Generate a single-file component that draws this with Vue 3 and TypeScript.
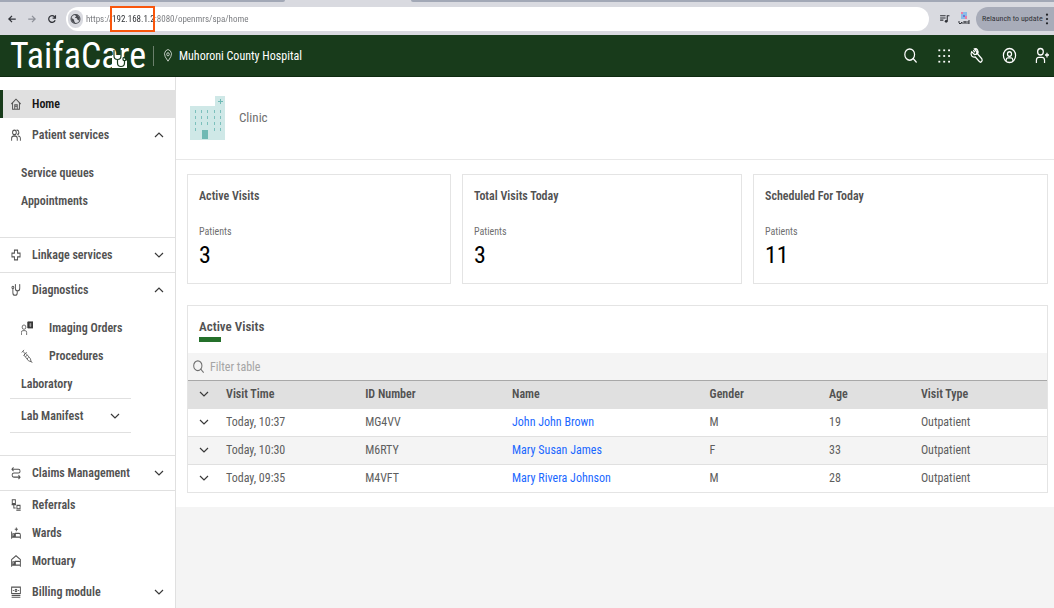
<script setup lang="ts">
import { ref } from 'vue'

interface NavChild { label: string; icon?: string; nested?: boolean }
interface NavItem { label: string; icon: string; kind: 'link' | 'group'; active?: boolean; open?: boolean; children?: NavChild[]; ruled?: boolean }
interface Visit { time: string; id: string; name: string; gender: string; age: number; type: string }

const icons: Record<string, string> = {
  home: 'M1 16 16 3 31 16M5 13V30H27V13M12 30V18H20V30M12 22H20',
  people: 'M17 9A6 6 0 1 1 5 9A6 6 0 1 1 17 9M2 31V25A6 6 0 0 1 8 19H14A6 6 0 0 1 20 25V31M18 3A6 6 0 1 1 20 15M23 19A6 6 0 0 1 30 25V31',
  cross: 'M11 3H21V11H29V21H21V29H11V21H3V11H11Z',
  steth: 'M9 9A3 3 0 1 1 3 9A3 3 0 1 1 9 9M6 12V23A7 7 0 0 0 20 23V18M16 2H14V11A7 7 0 0 0 28 11V2H26M20 17V20',
  syringe: 'M2 8 8 2M5 5 11 11M7 15 15 7M11 11 8 14 20 27 27 29 25 22 13 10M26 28 31 32M12 18 16 14M16 23 20 19',
  flow: 'M8 1 3 6 8 11M3 6H24A5 5 0 0 1 24 16H9A5 5 0 0 0 9 27H29M24 22 29 27 24 32',
  refer: 'M4 2H14V12H4ZM2 15H16M9 15V24H15M19 17H29V26H19ZM17 30H31',
  bed: 'M2 12V31M2 27H30V31M30 27V21A4 4 0 0 0 26 17H14V27M6 18H11V24H6ZM17 1V11M12 6H22',
  shelter: 'M2 31V12L16 2 30 12V31M2 27H30M14 27V17H25A4 4 0 0 1 30 21M6 18H11V24H6Z',
  billing: 'M2 3H30V20H2ZM2 25H30M2 30H30M19 12A3 3 0 1 1 13 12A3 3 0 1 1 19 12M6 12H9M23 12H26',
}

const nav = ref<NavItem[]>([
  { label: 'Home', icon: 'home', kind: 'link', active: true },
  { label: 'Patient services', icon: 'people', kind: 'group', open: true, ruled: true, children: [{ label: 'Service queues' }, { label: 'Appointments' }] },
  { label: 'Linkage services', icon: 'cross', kind: 'group', ruled: true },
  {
    label: 'Diagnostics', icon: 'steth', kind: 'group', open: true, ruled: true,
    children: [
      { label: 'Imaging Orders', icon: 'imaging' },
      { label: 'Procedures', icon: 'syringe' },
      { label: 'Laboratory' },
      { label: 'Lab Manifest', nested: true },
    ],
  },
  { label: 'Claims Management', icon: 'flow', kind: 'group', ruled: true },
  { label: 'Referrals', icon: 'refer', kind: 'link' },
  { label: 'Wards', icon: 'bed', kind: 'link' },
  { label: 'Mortuary', icon: 'shelter', kind: 'link' },
  { label: 'Billing module', icon: 'billing', kind: 'group' },
])

const metrics = [
  { title: 'Active Visits', value: 3 },
  { title: 'Total Visits Today', value: 3 },
  { title: 'Scheduled For Today', value: 11 },
]

const columns = ['Visit Time', 'ID Number', 'Name', 'Gender', 'Age', 'Visit Type']
const visits: Visit[] = [
  { time: 'Today, 10:37', id: 'MG4VV', name: 'John John Brown', gender: 'M', age: 19, type: 'Outpatient' },
  { time: 'Today, 10:30', id: 'M6RTY', name: 'Mary Susan James', gender: 'F', age: 33, type: 'Outpatient' },
  { time: 'Today, 09:35', id: 'M4VFT', name: 'Mary Rivera Johnson', gender: 'M', age: 28, type: 'Outpatient' },
]

const address = ref('https://192.168.1.2:8080/openmrs/spa/home')
const filter = ref('')
const windowRows = [14, 20, 26, 32].map((y, r) => ({ y, xs: r === 3 ? [5, 24, 30] : [5, 11, 17, 24, 30] }))
</script>

<template>
  <div class="window">
    <div class="tabs"><span class="tab-left"></span><span class="tab-right"></span></div>
    <div class="toolbar">
      <button class="tool" aria-label="Back"><svg viewBox="0 0 16 16" class="ic-nav"><path d="M14 8H3M8 3 3 8l5 5" /></svg></button>
      <button class="tool dim" aria-label="Forward"><svg viewBox="0 0 16 16" class="ic-nav"><path d="M2 8h11M8 3l5 5-5 5" /></svg></button>
      <button class="tool" aria-label="Reload"><svg viewBox="0 0 16 16" class="ic-nav"><path d="M13 10a5.300 5.300 0 1 1-1-5.500L13.500 6M13.500 2v4.500H9" /></svg></button>
      <div class="omnibox">
        <span class="site"><svg viewBox="0 0 16 16"><circle cx="8" cy="8" r="6.500" fill="none" stroke="#4a4c52" stroke-width="1.500" /><path d="M2 6l4 3v2l2 3-4-1-2-4zM7 2l4 0 3 4-1 4-2-1-1-2-3-1 2-2z" fill="#4a4c52" /></svg></span>
        <input v-model="address" class="url" aria-label="Address" spellcheck="false" />
        <span class="marker"></span>
      </div>
      <button class="tool media" aria-label="Media"><svg viewBox="0 0 20 20"><path d="M2 5h10M2 9h10M2 13h6" stroke="#2f3136" stroke-width="2" /><path d="M15 15V5h4" fill="none" stroke="#2f3136" stroke-width="2" /><circle cx="13" cy="15" r="2.500" fill="#2f3136" /></svg></button>
      <button class="tool ext" aria-label="Extension">
        <svg viewBox="0 0 12 14"><rect x="3" width="6" height="7" fill="#8bbbe8" /><path d="M3 0h2v2H3zM7 4h2v3H7z" fill="#ec7fa5" /><path d="M5 3h2v2H5z" fill="#6d78d6" /><path d="M1 9v2l1 1 2-2v2M6 12V9M6 10h2M8 9v3M10 12V9h2M10 11h2" fill="none" stroke="#303238" stroke-width="1" /></svg>
      </button>
      <button class="relaunch">Relaunch to update<svg viewBox="0 0 4 14"><circle cx="2" cy="2" r="1.300" /><circle cx="2" cy="7" r="1.300" /><circle cx="2" cy="12" r="1.300" /></svg></button>
    </div>

    <header class="header">
      <a href="#" class="brand">TaifaCare
        <svg class="brand-mark" viewBox="0 0 16 20"><path d="M1 6H10L16 12V19H1Z" fill="#fff" /><g fill="none" stroke="#183b1b" stroke-width="1.200"><path d="M3 1v6a3.500 3.500 0 0 0 7 0V1M6.500 11v3a3.500 3.500 0 0 0 7 0v-2" /><circle cx="13.500" cy="10" r="1.600" /></g></svg>
      </a>
      <span class="divider"></span>
      <a href="#" class="location">
        <svg viewBox="0 0 32 32" preserveAspectRatio="none"><path d="M16 30 7 19A11 11 0 1 1 25 19Z" /><circle cx="16" cy="13" r="4" /></svg>
        Muhoroni County Hospital
      </a>
      <div class="actions">
        <button aria-label="Search"><svg viewBox="0 0 32 32" preserveAspectRatio="none"><circle cx="14" cy="14" r="12" /><path d="M22 22 31 31" /></svg></button>
        <button aria-label="App menu">
          <svg viewBox="0 0 32 32" preserveAspectRatio="none" class="dots"><template v-for="y in [1, 14, 27]" :key="y"><rect v-for="x in [1, 14, 27]" :key="x" :x="x" :y="y" width="5" height="4" /></template></svg>
        </button>
        <button aria-label="Tools"><svg viewBox="0 0 32 32" preserveAspectRatio="none"><path d="M11 2 17 8 16 13 11 14 4 8C0 15 5 21 13 19L23 29C27 33 32 27 29 23L19 13C22 6 17 0 11 2ZM8 5 12 9" /></svg></button>
        <button aria-label="My account"><svg viewBox="0 0 32 32" preserveAspectRatio="none"><circle cx="16" cy="16" r="15" /><circle cx="16" cy="13" r="5" /><path d="M8 27V25A4 4 0 0 1 12 21H20A4 4 0 0 1 24 25V27" /></svg></button>
        <button aria-label="Add patient"><svg viewBox="0 0 32 32" preserveAspectRatio="none"><circle cx="11" cy="8" r="7" /><path d="M1 32V26A6 6 0 0 1 7 20H15A6 6 0 0 1 21 26V32M27 10V20M22 15H32" /></svg></button>
      </div>
    </header>

    <div class="body">
      <nav class="side" aria-label="Main">
        <template v-for="item in nav" :key="item.label">
          <a v-if="item.kind === 'link'" href="#" class="row" :class="{ active: item.active }">
            <svg class="ic" viewBox="0 0 32 32" preserveAspectRatio="none"><path :d="icons[item.icon]" /></svg>{{ item.label }}
          </a>
          <section v-else class="group" :class="{ ruled: item.ruled }">
            <button class="row head" :aria-expanded="!!item.open" @click="item.open = !item.open">
              <svg class="ic" viewBox="0 0 32 32" preserveAspectRatio="none"><path :d="icons[item.icon]" /></svg>
              <span class="grow">{{ item.label }}</span>
              <svg class="chev" :class="{ up: item.open }" viewBox="0 0 10 8"><path d="M1 2 5 6 9 2" /></svg>
            </button>
            <div v-if="item.open && item.children" class="children">
              <template v-for="child in item.children" :key="child.label">
                <button v-if="child.nested" class="nested"><span class="grow">{{ child.label }}</span><svg class="chev" viewBox="0 0 10 8"><path d="M1 2 5 6 9 2" /></svg></button>
                <a v-else href="#" class="child">
                  <svg v-if="child.icon === 'imaging'" class="child-ic" viewBox="0 0 32 32" preserveAspectRatio="none"><circle cx="8" cy="14" r="5" /><path d="M1 32V26A4 4 0 0 1 5 22H11A4 4 0 0 1 15 26V32" /><path d="M18 2H32V16H18Z" class="film" /><path d="M25 5V14M22 7H28M22 11H28" class="bone" /></svg>
                  <svg v-else-if="child.icon" class="child-ic" viewBox="0 0 32 32" preserveAspectRatio="none"><path :d="icons[child.icon]" /></svg>
                  {{ child.label }}
                </a>
              </template>
            </div>
          </section>
        </template>
      </nav>

      <main class="main">
        <div class="content">
          <div class="clinic">
            <svg class="building" viewBox="0 0 35 44" aria-hidden="true">
              <path d="M0 10H25V0H35V44H0Z" fill="#cfe8e7" />
              <path d="M28 5.500h5M30.500 3v5" stroke="#6fbab5" stroke-width="1" />
              <template v-for="row in windowRows" :key="row.y"><rect v-for="x in row.xs" :key="x" :x="x" :y="row.y" width="1" height="3" fill="#7cc0bc" /></template>
              <rect x="12" y="34" width="6" height="9" fill="#6fb9b4" />
            </svg>
            <span>Clinic</span>
          </div>

          <div class="cards">
            <article v-for="m in metrics" :key="m.title" class="card">
              <h2>{{ m.title }}</h2>
              <p class="cap">Patients</p>
              <p class="num">{{ m.value }}</p>
            </article>
          </div>

          <section class="visits">
            <h2 class="title">Active Visits</h2>
            <label class="filter">
              <svg viewBox="0 0 32 32" preserveAspectRatio="none"><circle cx="14" cy="14" r="12" /><path d="M22 22 31 31" /></svg>
              <input v-model="filter" type="text" placeholder="Filter table" aria-label="Filter table" />
            </label>
            <table>
              <colgroup><col class="c0" /><col class="c1" /><col class="c2" /><col class="c3" /><col class="c4" /><col class="c5" /><col /></colgroup>
              <thead>
                <tr>
                  <th><button class="expand" aria-label="Expand all"><svg class="chev" viewBox="0 0 10 8"><path d="M1 2 5 6 9 2" /></svg></button></th>
                  <th v-for="c in columns" :key="c">{{ c }}</th>
                </tr>
              </thead>
              <tbody>
                <tr v-for="v in visits" :key="v.id">
                  <td><button class="expand" aria-label="Expand row"><svg class="chev" viewBox="0 0 10 8"><path d="M1 2 5 6 9 2" /></svg></button></td>
                  <td>{{ v.time }}</td><td>{{ v.id }}</td><td><a href="#">{{ v.name }}</a></td><td>{{ v.gender }}</td><td>{{ v.age }}</td><td>{{ v.type }}</td>
                </tr>
              </tbody>
            </table>
          </section>
        </div>
      </main>
    </div>
  </div>
</template>

<style>
body { margin: 0; overflow: hidden; }
</style>

<style scoped>
* { box-sizing: border-box; }
.window { display: flex; flex-direction: column; height: 100vh; background: #fff; color: #525252; font-family: "Roboto Condensed", "Liberation Sans Narrow", "Arial Narrow", Roboto, sans-serif; font-size: 12px; line-height: 18px; }
button, input { font: inherit; color: inherit; border: 0; padding: 0; margin: 0; background: none; outline: 0; }
a { color: inherit; text-decoration: none; }
h2, p { margin: 0; }
svg { flex: none; }

.tabs { flex: none; display: flex; justify-content: space-between; height: 2px; background: #d9dae0; }
.tab-left { width: 27%; background: #a2a8b6; border-bottom-right-radius: 2px; }
.tab-right { width: 61%; background: #a2a8b6; border-bottom-left-radius: 2px; }
.toolbar { flex: none; display: flex; align-items: center; height: 33px; padding-left: 2px; background: #d9dae0; }
.tool { display: flex; align-items: center; justify-content: center; width: 20px; height: 24px; color: #303238; }
.tool.dim { color: #8d9098; }
.ic-nav { width: 10px; height: 12px; fill: none; stroke: currentColor; stroke-width: 2; }
.omnibox { position: relative; flex: 1; display: flex; align-items: center; height: 24px; margin: 0 4px; padding-left: 2px; border-radius: 12px; background: #fff; }
.site { display: flex; align-items: center; justify-content: center; width: 15px; height: 18px; border-radius: 9px; background: #d9dae0; }
.site svg { width: 11px; height: 12px; }
.url { flex: 1; margin-left: 3px; font-size: 9px; height: 20px; color: transparent; background: linear-gradient(90deg, #75777b 26px, #2c2e32 26px, #2c2e32 68px, #75777b 68px); background-clip: text; -webkit-background-clip: text; }
.marker { position: absolute; left: 44px; top: -1px; width: 45px; height: 26px; border: 2px solid #f9560c; }
.media { margin-left: 1px; }
.media svg { width: 11px; height: 13px; }
.ext svg { width: 12px; height: 14px; }
.relaunch { display: flex; align-items: center; justify-content: space-between; width: 78px; height: 24px; margin-left: 2px; padding: 0 5px 0 6px; border-radius: 12px 0 0 12px; background: #a8acb9; color: #303238; font-size: 8px; white-space: nowrap; }
.relaunch svg { width: 4px; height: 12px; fill: #202226; }

.header { flex: none; display: flex; align-items: center; height: 42px; padding-left: 10px; background: #183b1b; border-bottom: 1px solid #0e2a10; color: #fff; overflow: hidden; }
.brand { position: relative; width: 143px; font-size: 36px; line-height: 42px; white-space: nowrap; }
.brand-mark { position: absolute; left: 101px; top: 14px; width: 16px; height: 20px; }
.divider { width: 1px; height: 20px; background: #6b806c; }
.location { flex: 1; display: flex; align-items: center; gap: 6px; margin-left: 9px; }
.location svg { width: 10px; height: 13px; fill: none; stroke: #fff; stroke-width: 2; }
.actions { display: flex; margin-right: -5px; }
.actions button { display: flex; align-items: center; justify-content: center; width: 33px; height: 40px; }
.actions svg { width: 13px; height: 15px; fill: none; stroke: #fff; stroke-width: 3; overflow: visible; }
.actions .dots { width: 12px; height: 14px; fill: #fff; stroke: none; }

.body { flex: 1; display: flex; min-height: 0; }
.side { flex: none; width: 176px; padding-top: 13px; border-right: 1px solid #e0e0e0; font-weight: 600; overflow: hidden; }
.row { display: flex; align-items: center; width: 100%; height: 28px; padding-left: 11px; text-align: left; font-weight: 600; }
.row.active { padding-left: 8px; border-left: 3px solid #183b1b; background: #e0e0e0; color: #161616; }
.row.head { height: 34px; padding-right: 11px; }
.ic { width: 10px; height: 12px; margin-right: 11px; fill: none; stroke: #525252; stroke-width: 3; overflow: visible; }
.grow { flex: 1; }
.chev { width: 10px; height: 8px; fill: none; stroke: #393939; stroke-width: 1.200; }
.chev.up { transform: rotate(180deg); }
.group.ruled { border-bottom: 1px solid #e0e0e0; }
.children { padding: 7px 44px 22px 10px; }
.child { display: flex; align-items: center; height: 28px; padding-left: 11px; }
.child-ic { width: 12px; height: 14px; margin-right: 16px; fill: none; stroke: #525252; stroke-width: 2; }
.film { fill: #393939; stroke: #393939; }
.bone { stroke: #fff; stroke-width: 1; }
.nested { display: flex; align-items: center; width: 100%; height: 35px; padding: 0 11px; border-top: 1px solid #e0e0e0; border-bottom: 1px solid #e0e0e0; font-weight: 600; text-align: left; }

.main { flex: 1; min-width: 0; background: #f4f4f4; }
.content { padding-bottom: 14px; background: #fff; }
.clinic { display: flex; align-items: center; gap: 14px; height: 83px; padding-left: 14px; border-bottom: 1px solid #e8e8e8; color: #6f6f6f; font-size: 13px; }
.building { width: 35px; height: 44px; }
.cards { display: grid; grid-template-columns: 264fr 280fr 295fr; gap: 11px; padding: 14px 6px 21px 11px; }
.card { height: 110px; padding: 11px; border: 1px solid #e4e4e4; }
.card h2 { font-size: 12px; line-height: 20px; font-weight: 600; }
.cap { margin-top: 18px; font-size: 10px; line-height: 16px; color: #6f6f6f; }
.num { font-size: 24px; line-height: 30px; color: #000; }
.visits { margin: 0 6px 0 11px; border: 1px solid #e4e4e4; }
.title { height: 47px; padding: 10px 11px 0; font-size: 13px; line-height: 21px; font-weight: 600; }
.title::after { content: ""; display: block; width: 22px; height: 5px; background: #24702a; }
.filter { display: flex; align-items: center; height: 28px; padding-left: 5px; gap: 6px; background: #f4f4f4; border-bottom: 1px solid #a8a8a8; }
.filter svg { width: 11px; height: 13px; fill: none; stroke: #6f6f6f; stroke-width: 3; }
.filter input { flex: 1; }
.filter input::placeholder { color: #a5a5a5; opacity: 1; }
table { width: 100%; table-layout: fixed; border-collapse: collapse; }
.c0 { width: 38px; } .c1 { width: 16.200%; } .c2 { width: 17.100%; } .c3 { width: 23%; } .c4 { width: 13.900%; } .c5 { width: 10.700%; }
th, td { height: 28px; padding: 0; text-align: left; }
th { height: 27px; background: #e0e0e0; font-weight: 600; }
td { border-top: 1px solid #e0e0e0; color: #5e5e5e; }
tbody tr:nth-child(even) { background: #f4f4f4; }
td a { color: #1a68ff; }
.expand { display: flex; align-items: center; justify-content: center; width: 32px; height: 26px; }
</style>
